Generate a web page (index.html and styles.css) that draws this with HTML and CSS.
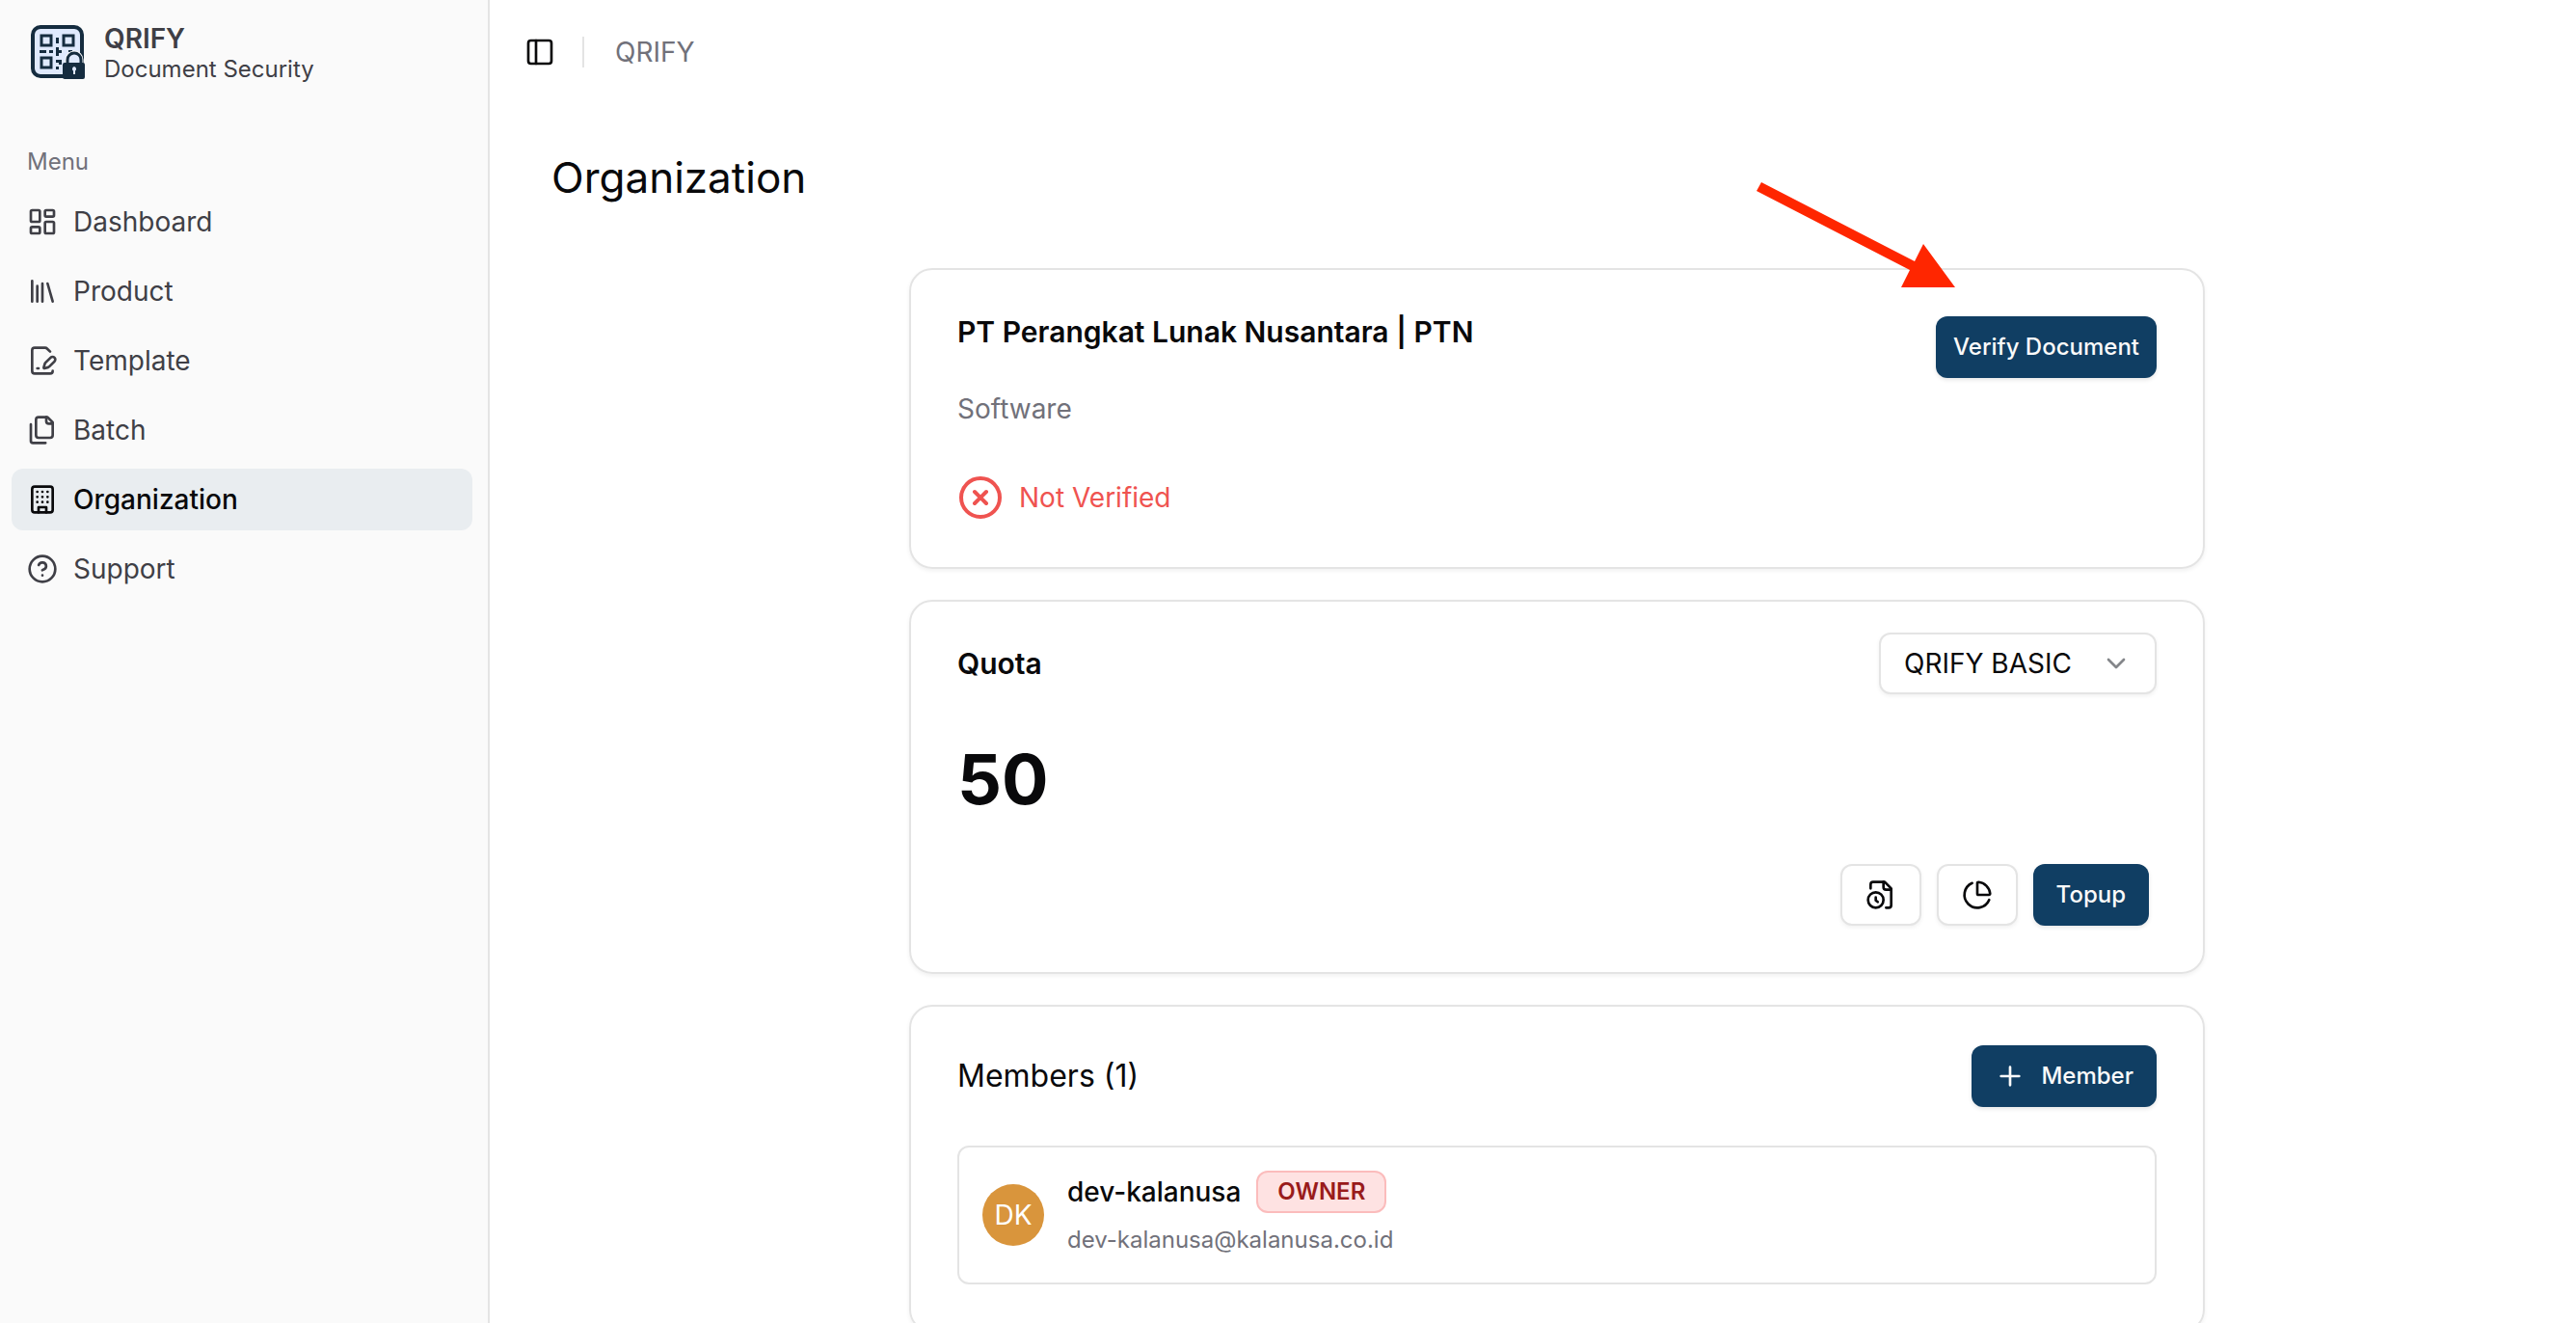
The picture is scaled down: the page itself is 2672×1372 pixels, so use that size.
FILE: index.html
```html
<!DOCTYPE html>
<html lang="en">
<head>
    <title>QRIFY - Organization</title>
    <meta charset="UTF-8">
    <meta name="viewport" content="width=device-width, initial-scale=1">
    <link rel="stylesheet" href="styles.css">
</head>

<body>
    <aside class="sidebar">
        <a class="brand" href="#">
            <svg class="logo" viewBox="0 0 56 56" aria-hidden="true">
                <rect x="2" y="2" width="51" height="51" rx="8" fill="#dfe9fd" stroke="#152c3f" stroke-width="4"/>
                <g fill="none" stroke="#152c3f" stroke-width="3">
                    <rect x="11" y="11" width="10" height="10"/>
                    <rect x="34" y="11" width="10" height="10"/>
                    <rect x="11" y="34" width="10" height="10"/>
                </g>
                <path fill="#152c3f" d="M26 13h3v6h-3zM9 26h7v3H9zM19 26h4v3h-4zM26 23h3v3h3v3h-3v3h-3zM26 36h6v5h-3v-2h-3zM26 43h3v3h-3zM39 26h4v2h-4z"/>
                <path fill="none" stroke="#fafafa" stroke-width="5" d="M38 41v-5a7 7 0 0 1 14 0v5"/>
                <path fill="#dfe9fd" stroke="#152c3f" stroke-width="3" d="M38 41v-5a7 7 0 0 1 14 0v5"/>
                <rect x="33" y="39" width="23" height="17" rx="2" fill="#152c3f"/>
                <path fill="#dfe9fd" d="M45 43a2.500 2.500 0 0 1 1 4.500V51h-2v-3.500a2.500 2.500 0 0 1 1-4.500z"/>
            </svg>
            <span class="brand-text">
                <strong>QRIFY</strong>
                <span>Document Security</span>
            </span>
        </a>
        <h2 class="menu-label">Menu</h2>
        <nav class="menu">
            <a href="#">
                <svg class="icon" viewBox="0 0 24 24"><rect x="3" y="3" width="7" height="9" rx="1"/><rect x="14" y="3" width="7" height="5" rx="1"/><rect x="14" y="12" width="7" height="9" rx="1"/><rect x="3" y="16" width="7" height="5" rx="1"/></svg>
                Dashboard
            </a>
            <a href="#">
                <svg class="icon" viewBox="0 0 24 24"><path d="m16 6 4 14M12 6v14M8 8v12M4 4v16"/></svg>
                Product
            </a>
            <a href="#">
                <svg class="icon" viewBox="0 0 24 24"><path d="m18 5-2.414-2.414A2 2 0 0 0 14.172 2H6a2 2 0 0 0-2 2v16a2 2 0 0 0 2 2h12a2 2 0 0 0 2-2"/><path d="M21.378 12.626a1 1 0 0 0-3.004-3.004l-4.010 4.012a2 2 0 0 0-.506.854l-.837 2.870a.5.5 0 0 0 .62.62l2.870-.837a2 2 0 0 0 .854-.506z"/><path d="M8 18h1"/></svg>
                Template
            </a>
            <a href="#">
                <svg class="icon" viewBox="0 0 24 24"><path d="M20 7h-3a2 2 0 0 1-2-2V2"/><path d="M9 18a2 2 0 0 1-2-2V4a2 2 0 0 1 2-2h7l4 4v10a2 2 0 0 1-2 2Z"/><path d="M3 7.600v12.800A1.600 1.600 0 0 0 4.600 22h9.800"/></svg>
                Batch
            </a>
            <a class="active" href="#" aria-current="page">
                <svg class="icon" viewBox="0 0 24 24"><rect x="4" y="2" width="16" height="20" rx="2"/><path d="M9 22v-4h6v4M8 6h.01M16 6h.01M12 6h.01M12 10h.01M12 14h.01M16 10h.01M16 14h.01M8 10h.01M8 14h.01"/></svg>
                Organization
            </a>
            <a href="#">
                <svg class="icon" viewBox="0 0 24 24"><circle cx="12" cy="12" r="10"/><path d="M9.090 9a3 3 0 0 1 5.830 1c0 2-3 3-3 3M12 17h.01"/></svg>
                Support
            </a>
        </nav>
    </aside>

    <div class="page">
        <header class="topbar">
            <button class="toggle" aria-label="Toggle sidebar">
                <svg class="icon" viewBox="0 0 24 24"><rect x="3" y="3" width="18" height="18" rx="2"/><path d="M9 3v18"/></svg>
            </button>
            <span class="divider"></span>
            <a class="crumb" href="#">QRIFY</a>
        </header>

        <main class="content">
            <h1>Organization</h1>
            <div class="cards">
                <section class="card company">
                    <div class="card-head">
                        <h2>PT Perangkat Lunak Nusantara | PTN</h2>
                        <button class="btn primary verify">Verify Document</button>
                    </div>
                    <p class="field">Software</p>
                    <p class="status">
                        <svg class="icon large" viewBox="0 0 24 24"><circle cx="12" cy="12" r="10"/><path d="m15 9-6 6M9 9l6 6"/></svg>
                        Not Verified
                    </p>
                    <!-- arrow pointing at the verify button -->
                    <svg class="arrow" viewBox="0 0 210 112" aria-hidden="true"><path d="M7 1 166 83 175 65 208 110H152L161 92 2 10z"/></svg>
                </section>

                <section class="card quota">
                    <div class="card-head">
                        <h2>Quota</h2>
                        <div class="select">
                            <select aria-label="Plan">
                                <option>QRIFY BASIC</option>
                            </select>
                            <svg class="icon" viewBox="0 0 24 24"><path d="m6 9 6 6 6-6"/></svg>
                        </div>
                    </div>
                    <p class="amount">50</p>
                    <div class="actions">
                        <button class="btn outline" aria-label="History">
                            <svg class="icon" viewBox="0 0 24 24"><path d="M16 22h2a2 2 0 0 0 2-2V7l-5-5H6a2 2 0 0 0-2 2v3"/><path d="M14 2v4a2 2 0 0 0 2 2h4"/><circle cx="8" cy="16" r="6"/><path d="M9.500 17.500 8 16.250V14"/></svg>
                        </button>
                        <button class="btn outline" aria-label="Usage">
                            <svg class="icon" viewBox="0 0 24 24"><path d="M21 12c.552 0 1.005-.449.95-.998a10 10 0 0 0-8.953-8.951c-.55-.055-.998.398-.998.95v8a1 1 0 0 0 1 1z"/><path d="M21.210 15.890A10 10 0 1 1 8 2.830"/></svg>
                        </button>
                        <button class="btn primary">Topup</button>
                    </div>
                </section>

                <section class="card members">
                    <div class="card-head">
                        <h2>Members (1)</h2>
                        <button class="btn primary">
                            <svg class="icon" viewBox="0 0 24 24"><path d="M5 12h14M12 5v14"/></svg>
                            Member
                        </button>
                    </div>
                    <div class="member">
                        <span class="avatar">DK</span>
                        <div class="member-info">
                            <div class="member-name">
                                dev-kalanusa
                                <span class="badge">OWNER</span>
                            </div>
                            <span class="email">dev-kalanusa@kalanusa.co.id</span>
                        </div>
                    </div>
                </section>
            </div>
        </main>
    </div>
</body>
</html>
```
FILE: styles.css
```css
* {
    box-sizing: border-box;
    margin: 0;
    padding: 0;
}

body {
    display: flex;
    height: 100vh;
    overflow: hidden;
    background-color: white;
    color: #09090b;
    font-family: Inter, "Liberation Sans", sans-serif;
    font-size: 28px;
    line-height: 40px;
}

a {
    color: inherit;
    text-decoration: none;
}

button, select {
    font: inherit;
    color: inherit;
    cursor: pointer;
}

.icon {
    width: 32px;
    height: 32px;
    flex-shrink: 0;
    fill: none;
    stroke: currentColor;
    stroke-width: 2;
    stroke-linecap: round;
    stroke-linejoin: round;
}

.large {
    width: 48px;
    height: 48px;
}

/* sidebar */
.sidebar {
    flex: 0 0 508px;
    padding: 20px 16px 0 12px;
    background-color: #fafafa;
    border-right: 2px solid #e4e4e4;
    color: #3f3f46;
}

.brand {
    display: flex;
    align-items: center;
    gap: 20px;
    padding-left: 20px;
}

.logo {
    width: 56px;
    height: 56px;
}

.brand-text {
    display: flex;
    flex-direction: column;
    padding-top: 4px;
    font-size: 24px;
    line-height: 32px;
}

.brand-text strong {
    font-size: 28px;
    font-weight: 600;
}

.menu-label {
    padding: 64px 16px 14px;
    font-size: 24px;
    font-weight: 400;
    line-height: 32px;
    color: #71717a;
}

.menu {
    display: flex;
    flex-direction: column;
    gap: 8px;
}

.menu a {
    display: flex;
    align-items: center;
    gap: 16px;
    padding: 12px 16px;
    border-radius: 12px;
}

.menu .active {
    background-color: #e9edf0;
    color: #09090b;
    font-weight: 500;
}

/* main column */
.page {
    flex: 1;
    min-width: 0;
}

.topbar {
    display: flex;
    align-items: center;
    height: 108px;
    padding-left: 36px;
}

.toggle {
    display: flex;
    border: none;
    background: none;
}

.divider {
    width: 2px;
    height: 32px;
    margin: 0 32px 0 28px;
    background-color: #e4e4e4;
}

.crumb {
    color: #71717a;
}

.content {
    padding: 44px 14px 0 64px;
}

h1 {
    font-size: 44px;
    font-weight: 400;
    line-height: 64px;
}

.cards {
    display: flex;
    flex-direction: column;
    gap: 32px;
    max-width: 1344px;
    margin: 62px auto 0;
}

.card {
    position: relative;
    padding: 48px;
    border: 2px solid #e4e4e4;
    border-radius: 24px;
    box-shadow: 0 2px 4px rgba(0, 0, 0, 0.06);
}

.card-head {
    display: flex;
    justify-content: space-between;
}

.card h2 {
    font-size: 30px;
    font-weight: 600;
    line-height: 32px;
}

.field {
    margin-top: 12px;
    color: #71717a;
}

.status {
    display: flex;
    align-items: center;
    gap: 16px;
    margin-top: 48px;
    color: #ef5350;
}

.arrow {
    position: absolute;
    top: -92px;
    right: 255px;
    width: 210px;
    height: 112px;
    fill: #ff2600;
}

.btn {
    display: flex;
    align-items: center;
    justify-content: center;
    gap: 16px;
    height: 64px;
    padding: 0 24px;
    border: none;
    border-radius: 12px;
    font-size: 24px;
    font-weight: 500;
    box-shadow: 0 2px 4px rgba(0, 0, 0, 0.1);
}

.primary {
    background-color: #103e63;
    color: #fafafa;
}

.verify {
    padding: 0 18px;
}

.outline {
    border: 2px solid #e4e4e4;
    background-color: white;
    box-shadow: 0 2px 4px rgba(0, 0, 0, 0.06);
}

.quota {
    padding-top: 32px;
}

.quota .card-head, .members .card-head {
    align-items: center;
}

.select {
    position: relative;
    width: 288px;
}

.select select {
    display: block;
    width: 100%;
    height: 64px;
    padding: 0 24px;
    border: 2px solid #e4e4e4;
    border-radius: 12px;
    background-color: white;
    appearance: none;
    box-shadow: 0 2px 4px rgba(0, 0, 0, 0.06);
}

.select .icon {
    position: absolute;
    top: 16px;
    right: 26px;
    color: #84868a;
    pointer-events: none;
}

.amount {
    margin-top: 48px;
    font-size: 72px;
    font-weight: 700;
    line-height: 80px;
}

.actions {
    display: flex;
    justify-content: flex-end;
    gap: 16px;
    margin-top: 48px;
    padding-right: 8px;
}

.members {
    padding-top: 40px;
}

.members h2 {
    font-size: 32px;
    font-weight: 400;
}

.member {
    display: flex;
    align-items: center;
    gap: 24px;
    margin-top: 40px;
    padding: 24px;
    border: 2px solid #e4e4e4;
    border-radius: 12px;
}

.avatar {
    width: 64px;
    border-radius: 50%;
    background-color: #d9953c;
    color: white;
    line-height: 64px;
    text-align: center;
}

.member-info {
    display: flex;
    flex-direction: column;
    gap: 8px;
}

.member-name {
    display: flex;
    align-items: center;
    gap: 16px;
    font-weight: 500;
}

.badge {
    padding: 4px 20px;
    border: 2px solid #fbbcbc;
    border-radius: 12px;
    background-color: #fee2e2;
    color: #991b1b;
    font-size: 24px;
    font-weight: 600;
    line-height: 32px;
}

.email {
    color: #71717a;
    font-size: 24px;
}
```
